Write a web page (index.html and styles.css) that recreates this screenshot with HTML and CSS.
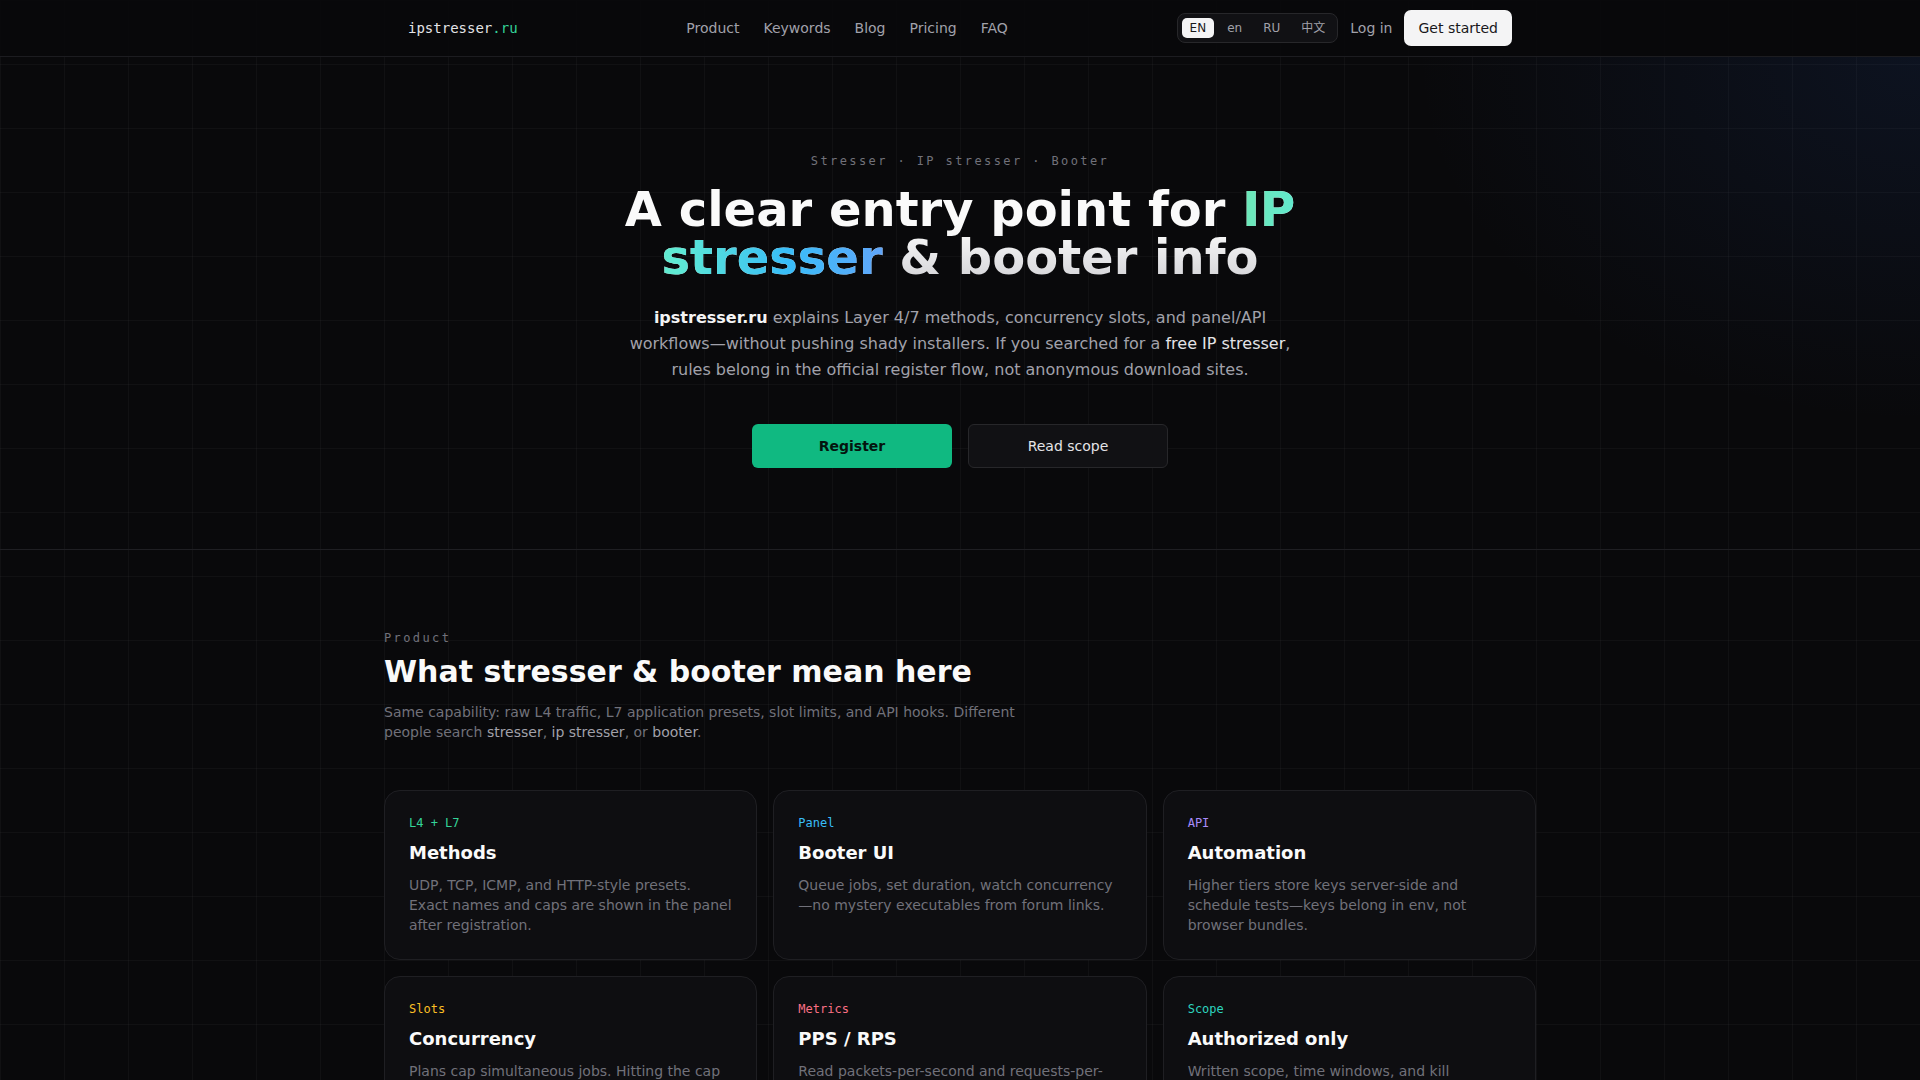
FILE: index.html
```html
<!DOCTYPE html>
<html lang="en">
<head>
  <meta charset="UTF-8" />
  <meta name="viewport" content="width=device-width, initial-scale=1.0" />
  <title>IP Stresser &amp; Booter — ipstresser.ru</title>
  <link rel="stylesheet" href="styles.css">
</head>
<body>
  <header class="site-header">
    <div class="header-inner">
      <a class="logo" href="#">ipstresser<span>.ru</span></a>
      <nav class="main-nav">
        <a href="#product">Product</a>
        <a href="#keywords">Keywords</a>
        <a href="#blog">Blog</a>
        <a href="#pricing">Pricing</a>
        <a href="#faq">FAQ</a>
      </nav>
      <div class="header-actions">
        <div class="lang-switch">
          <button class="active">EN</button>
          <button>en</button>
          <button>RU</button>
          <button>中文</button>
        </div>
        <a class="login" href="#">Log in</a>
        <a class="btn-start" href="#">Get started</a>
      </div>
    </div>
  </header>

  <section class="hero">
    <p class="eyebrow">Stresser · IP stresser · Booter</p>
    <h1>A clear entry point for <span class="accent">IP stresser</span> &amp; booter info</h1>
    <p class="hero-text">
      <strong>ipstresser.ru</strong> explains Layer 4/7 methods, concurrency slots, and panel/API workflows—without pushing shady installers. If you searched for a <span class="hl">free IP stresser</span>, rules belong in the official register flow, not anonymous download sites.
    </p>
    <div class="hero-actions">
      <a class="btn btn-primary" href="#">Register</a>
      <a class="btn btn-ghost" href="#scope">Read scope</a>
    </div>
  </section>

  <section class="product" id="product">
    <div class="wrap">
      <p class="eyebrow">Product</p>
      <h2>What stresser &amp; booter mean here</h2>
      <p class="section-intro">
        Same capability: raw L4 traffic, L7 application presets, slot limits, and API hooks. Different people search <em>stresser</em>, <em>ip stresser</em>, or <em>booter</em>.
      </p>

      <div class="cards">
        <div class="card">
          <span class="tag tag-green">L4 + L7</span>
          <h3>Methods</h3>
          <p>UDP, TCP, ICMP, and HTTP-style presets. Exact names and caps are shown in the panel after registration.</p>
        </div>
        <div class="card">
          <span class="tag tag-sky">Panel</span>
          <h3>Booter UI</h3>
          <p>Queue jobs, set duration, watch concurrency—no mystery executables from forum links.</p>
        </div>
        <div class="card">
          <span class="tag tag-violet">API</span>
          <h3>Automation</h3>
          <p>Higher tiers store keys server-side and schedule tests—keys belong in env, not browser bundles.</p>
        </div>
        <div class="card">
          <span class="tag tag-amber">Slots</span>
          <h3>Concurrency</h3>
          <p>Plans cap simultaneous jobs. Hitting the cap queues new runs instead of dropping them.</p>
        </div>
        <div class="card">
          <span class="tag tag-rose">Metrics</span>
          <h3>PPS / RPS</h3>
          <p>Read packets-per-second and requests-per-second from live graphs while a test runs.</p>
        </div>
        <div class="card" id="scope">
          <span class="tag tag-teal">Scope</span>
          <h3>Authorized only</h3>
          <p>Written scope, time windows, and kill switches are required before any test starts.</p>
        </div>
      </div>
    </div>
  </section>
</body>
</html>
```

FILE: styles.css
```css
* {
  box-sizing: border-box;
  margin: 0;
  padding: 0;
}

body {
  font-family: "DejaVu Sans", "Noto Sans CJK SC", sans-serif;
  color: #fafafa;
  background-color: #09090b;
  background-image:
    linear-gradient(rgba(255, 255, 255, 0.03) 1px, transparent 1px),
    linear-gradient(90deg, rgba(255, 255, 255, 0.03) 1px, transparent 1px);
  background-size: 64px 64px;
}

a {
  color: inherit;
  text-decoration: none;
}

/* header */

.site-header {
  background: rgba(9, 9, 11, 0.94);
  border-bottom: 1px solid #1c1c20;
}

.header-inner {
  max-width: 1152px;
  height: 56px;
  margin: 0 auto;
  padding: 0 24px;
  display: flex;
  align-items: center;
  justify-content: space-between;
}

.logo {
  font-family: "DejaVu Sans Mono", monospace;
  font-size: 14px;
  color: #e4e4e7;
}

.logo span {
  color: #34d399;
}

.main-nav {
  display: flex;
  gap: 24px;
  font-size: 14px;
}

.main-nav a {
  color: #a1a1aa;
}

.header-actions {
  display: flex;
  align-items: center;
  gap: 12px;
  font-size: 14px;
}

.lang-switch {
  display: flex;
  gap: 5px;
  padding: 4px;
  border: 1px solid #27272a;
  border-radius: 8px;
  background: rgba(24, 24, 27, 0.6);
}

.lang-switch button {
  font-family: "DejaVu Sans", "Noto Sans CJK SC", sans-serif;
  font-size: 12px;
  line-height: 16px;
  padding: 2px 8px;
  border: none;
  border-radius: 5px;
  background: none;
  color: #a1a1aa;
  cursor: pointer;
}

.lang-switch button.active {
  background: #f4f4f5;
  color: #18181b;
}

.login {
  color: #a1a1aa;
}

.btn-start {
  display: inline-flex;
  align-items: center;
  height: 36px;
  padding: 0 14px;
  border-radius: 7px;
  background: #f4f4f5;
  color: #18181b;
}

/* hero */

.hero {
  padding: 96px 24px 81px;
  text-align: center;
  border-bottom: 1px solid #1f1f23;
  background: radial-gradient(ellipse 720px 520px at 100% 0%, rgba(37, 78, 160, 0.14), transparent 70%);
}

.eyebrow {
  font-family: "DejaVu Sans Mono", monospace;
  font-size: 12px;
  line-height: 16px;
  letter-spacing: 0.2em;
  color: #71717a;
}

.hero h1 {
  max-width: 768px;
  margin: 16px auto 0;
  font-size: 48px;
  line-height: 48px;
  font-weight: 700;
  color: transparent;
  background: linear-gradient(180deg, #fafafa 45%, #d4d4d8);
  -webkit-background-clip: text;
  background-clip: text;
}

.hero h1 .accent {
  background: linear-gradient(90deg, #6ee7b7 0%, #5eead4 25%, #38bdf8 65%, #60a5fa 100%);
  -webkit-background-clip: text;
  background-clip: text;
}

.hero-text {
  max-width: 672px;
  margin: 24px auto 0;
  font-size: 16px;
  line-height: 26px;
  color: #a1a1aa;
}

.hero-text strong {
  color: #f4f4f5;
}

.hero-text .hl {
  color: #e4e4e7;
}

.hero-actions {
  margin-top: 41px;
  display: flex;
  justify-content: center;
  gap: 16px;
}

.btn {
  width: 200px;
  height: 44px;
  display: inline-flex;
  align-items: center;
  justify-content: center;
  border-radius: 6px;
  font-size: 14px;
}

.btn-primary {
  background: #10b981;
  color: #04140e;
  font-weight: 700;
}

.btn-ghost {
  background: #111114;
  border: 1px solid #27272a;
  color: #e4e4e7;
}

/* product */

.product {
  padding: 80px 24px 96px;
}

.wrap {
  max-width: 1152px;
  margin: 0 auto;
}

.product h2 {
  margin-top: 8px;
  font-size: 30px;
  line-height: 36px;
  font-weight: 700;
}

.section-intro {
  max-width: 672px;
  margin-top: 12px;
  font-size: 14px;
  line-height: 20px;
  color: #71717a;
}

.section-intro em {
  font-style: normal;
  color: #a1a1aa;
}

.cards {
  margin-top: 48px;
  display: grid;
  grid-template-columns: repeat(3, 1fr);
  gap: 16px;
}

.card {
  padding: 24px;
  background: #0e0e11;
  border: 1px solid #1f1f23;
  border-radius: 16px;
}

.tag {
  display: block;
  font-family: "DejaVu Sans Mono", monospace;
  font-size: 12px;
  line-height: 16px;
}

.tag-green { color: #34d399; }
.tag-sky { color: #38bdf8; }
.tag-violet { color: #a78bfa; }
.tag-amber { color: #fbbf24; }
.tag-rose { color: #fb7185; }
.tag-teal { color: #2dd4bf; }

.card h3 {
  margin-top: 8px;
  font-size: 18px;
  line-height: 28px;
  font-weight: 700;
}

.card p {
  margin-top: 8px;
  font-size: 14px;
  line-height: 20px;
  color: #71717a;
}
```
